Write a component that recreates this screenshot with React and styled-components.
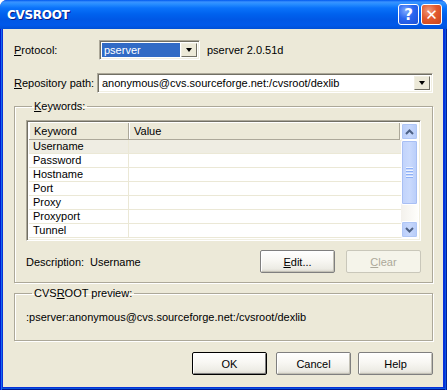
import React from 'react';
import styled, { createGlobalStyle } from 'styled-components';

const GlobalStyle = createGlobalStyle`
  html, body { margin: 0; padding: 0; background: #fff; }
  body {
    font-family: "Liberation Sans", Arial, sans-serif;
    font-size: 11px;
    color: #000;
  }
`;

const Window = styled.div`
  width: 447px;
  height: 390px;
  display: flex;
  flex-direction: column;
  border-radius: 7px 7px 0 0;
  overflow: hidden;
  background: #0831d9;
`;

const TitleBar = styled.div`
  height: 29px;
  flex: none;
  display: flex;
  align-items: center;
  padding: 0 5px 0 7px;
  box-sizing: border-box;
  background: linear-gradient(
    to bottom,
    #0058ee 0px,
    #3a93ff 2px,
    #288eff 4px,
    #0a72fa 8px,
    #0062ee 14px,
    #0057e5 20px,
    #0059ea 25px,
    #004fd6 29px
  );
`;

const Title = styled.div`
  flex: 1;
  color: #fff;
  font-family: "DejaVu Sans", "Liberation Sans", sans-serif;
  font-weight: bold;
  font-size: 12px;
  letter-spacing: -0.3px;
  text-shadow: 1px 1px 0 #0a1883;
  padding-top: 1px;
`;

const CaptionButton = styled.div`
  width: 21px;
  height: 21px;
  box-sizing: border-box;
  border: 1px solid #fff;
  border-radius: 3px;
  margin-left: 2px;
  display: flex;
  align-items: center;
  justify-content: center;
  color: #fff;
  font-family: "DejaVu Sans", sans-serif;
  font-weight: bold;
  font-size: 15px;
  background: ${p =>
    p.$close
      ? 'radial-gradient(circle at 35% 30%, #f09a7c 0%, #e2592e 45%, #c8441c 100%)'
      : 'radial-gradient(circle at 35% 30%, #7ea9ff 0%, #2a66f0 45%, #1c4fd6 100%)'};
`;

const Frame = styled.div`
  flex: 1;
  display: flex;
  padding: 0 4px 3px 3px;
  background: #0831d9;
  box-shadow: inset 1px 0 0 #0019cf, inset 2px 0 0 #166aee, inset -1px 0 0 #001ea0,
    inset -2px 0 0 #0855dd, inset 0 -1px 0 #00138c, inset 0 -2px 0 #0855dd;
`;

const Client = styled.div`
  flex: 1;
  background: #ece9d8;
  padding: 11px 10px 0 11px;
  display: flex;
  flex-direction: column;
`;

const FieldRow = styled.div`
  display: flex;
  align-items: center;
  height: 20px;
  margin-top: ${p => p.$gap || 0}px;
`;

const Label = styled.div`
  width: ${p => p.$w}px;
  flex: none;
  white-space: nowrap;
`;

const U = styled.span`
  text-decoration: underline;
  text-underline-offset: 1px;
`;

const Combo = styled.div`
  width: ${p => (p.$w ? `${p.$w}px` : 'auto')};
  flex: ${p => (p.$w ? 'none' : '1')};
  height: 20px;
  box-sizing: border-box;
  display: flex;
  background: #fff;
  border: 1px solid;
  border-color: #aca899 #fff #fff #aca899;
  box-shadow: inset 1px 1px 0 #716f64, inset -1px -1px 0 #f1efe2;
  padding: 2px;
`;

const ComboText = styled.div`
  flex: 1;
  display: flex;
  align-items: center;
  padding-left: 2px;
  white-space: nowrap;
  overflow: hidden;
  background: ${p => (p.$selected ? '#316ac5' : 'transparent')};
  color: ${p => (p.$selected ? '#fff' : '#000')};
`;

const ComboButton = styled.div`
  width: 16px;
  flex: none;
  display: flex;
  align-items: center;
  justify-content: center;
  background: #ece9d8;
  border: 1px solid;
  border-color: #f1efe2 #716f64 #716f64 #f1efe2;
  box-sizing: border-box;
  margin-left: 1px;
`;

const Caret = styled.div`
  width: 0;
  height: 0;
  border-left: 3.5px solid transparent;
  border-right: 3.5px solid transparent;
  border-top: 4px solid #000;
`;

const Info = styled.div`
  margin-left: 7px;
`;

const Group = styled.fieldset`
  margin: ${p => p.$top}px 0 0;
  padding: ${p => p.$pad};
  border: 1px solid #aca899;
  box-shadow: inset 1px 1px 0 #fff, 1px 1px 0 #fff;
  min-width: 0;
`;

const Legend = styled.legend`
  padding: 0 2px;
  margin-left: 6px;
  line-height: 13px;
`;

const ListView = styled.div`
  height: 121px;
  box-sizing: border-box;
  display: flex;
  border: 1px solid;
  border-color: #aca899 #fff #fff #aca899;
  box-shadow: inset 1px 1px 0 #716f64, inset -1px -1px 0 #f1efe2;
  padding: 2px;
  background: #fff;
`;

const Table = styled.div`
  flex: 1;
  display: flex;
  flex-direction: column;
  overflow: hidden;
`;

const HeaderRow = styled.div`
  display: flex;
  height: 17px;
  flex: none;
  box-sizing: border-box;
  background: #ece9d8;
  border-bottom: 1px solid #aca899;
  margin-right: 1px;
`;

const HeaderCell = styled.div`
  width: ${p => (p.$w ? `${p.$w}px` : 'auto')};
  flex: ${p => (p.$w ? 'none' : '1')};
  padding-left: 5px;
  display: flex;
  align-items: center;
  box-sizing: border-box;
  border-right: 1px solid #aca899;
  box-shadow: inset 1px 0 0 #fff;
`;

const Row = styled.div`
  display: flex;
  height: 14px;
  flex: none;
  box-sizing: border-box;
  border-bottom: 1px solid #ebe8d6;
  background: ${p => (p.$active ? '#efede3' : '#fff')};
`;

const Cell = styled.div`
  width: ${p => (p.$w ? `${p.$w}px` : 'auto')};
  flex: ${p => (p.$w ? 'none' : '1')};
  padding-left: 4px;
  line-height: 13px;
  box-sizing: border-box;
  border-right: ${p => (p.$w ? '1px solid #ebe8d6' : 'none')};
`;

const ScrollBar = styled.div`
  width: 17px;
  flex: none;
  display: flex;
  flex-direction: column;
  background: linear-gradient(to right, #f3f1ec, #fefefb);
`;

const ScrollButton = styled.div`
  height: 17px;
  flex: none;
  box-sizing: border-box;
  border: 1px solid #fff;
  border-radius: 2px;
  background: linear-gradient(to right, #b9cdfa, #c6d7fc 50%, #b6cbf7);
  box-shadow: inset 0 0 0 1px #afc6f6;
  display: flex;
  align-items: center;
  justify-content: center;
`;

const Thumb = styled.div`
  height: 65px;
  flex: none;
  box-sizing: border-box;
  border: 1px solid #fff;
  border-radius: 2px;
  background: linear-gradient(to right, #c1d3fb, #cadafd 50%, #b8cdf9);
  box-shadow: inset 0 0 0 1px #a8bff4;
  display: flex;
  flex-direction: column;
  align-items: center;
  justify-content: center;
  gap: 1px;
`;

const Grip = styled.div`
  width: 7px;
  height: 1px;
  background: #eef3ff;
  box-shadow: 0 1px 0 #8cb0f8;
  margin-bottom: 1px;
`;

const Track = styled.div`
  flex: 1;
`;

const DescRow = styled.div`
  display: flex;
  align-items: center;
  margin-top: 9px;
`;

const DescValue = styled.div`
  flex: 1;
`;

const Button = styled.button`
  width: 75px;
  height: 23px;
  margin: 0 0 0 ${p => p.$gap || 0}px;
  padding: 0;
  box-sizing: border-box;
  font-family: "Liberation Sans", Arial, sans-serif;
  font-size: 11px;
  color: ${p => (p.disabled ? '#aca899' : '#000')};
  border: 1px solid ${p => (p.$default ? '#000' : p.disabled ? '#c9c7ba' : '#7f7f7f')};
  border-radius: 2px;
  background: ${p =>
    p.disabled
      ? '#f5f4ea'
      : 'linear-gradient(to bottom, #ffffff 0%, #f8f7f3 45%, #ecebe4 85%, #d8d5ca 100%)'};
  box-shadow: ${p =>
    p.$default
      ? 'inset 1px 1px 0 #fff, inset -1px -1px 0 #7f7f7f'
      : p.disabled
      ? 'none'
      : 'inset 1px 1px 0 #fff, inset -1px -1px 0 #c3c1b6'};
`;

const Preview = styled.div`
  white-space: nowrap;
  line-height: 13px;
`;

const Footer = styled.div`
  display: flex;
  justify-content: flex-end;
  margin-top: 11px;
`;

const Chevron = ({ down }) => (
  <svg width="9" height="6" viewBox="0 0 9 6">
    <polyline
      points={down ? '1,1 4.5,4.5 8,1' : '1,5 4.5,1.5 8,5'}
      fill="none"
      stroke="#4d6185"
      strokeWidth="2"
    />
  </svg>
);

const keywords = ['Username', 'Password', 'Hostname', 'Port', 'Proxy', 'Proxyport', 'Tunnel'];

export default function App() {
  return (
    <>
      <GlobalStyle />
      <Window>
        <TitleBar>
          <Title>CVSROOT</Title>
          <CaptionButton>?</CaptionButton>
          <CaptionButton $close>✕</CaptionButton>
        </TitleBar>
        <Frame>
          <Client>
            <FieldRow>
              <Label $w={85}>
                <U>P</U>rotocol:
              </Label>
              <Combo $w={101}>
                <ComboText $selected>pserver</ComboText>
                <ComboButton>
                  <Caret />
                </ComboButton>
              </Combo>
              <Info>pserver 2.0.51d</Info>
            </FieldRow>
            <FieldRow $gap={13}>
              <Label $w={83}>
                <U>R</U>epository path:
              </Label>
              <Combo>
                <ComboText>anonymous@cvs.sourceforge.net:/cvsroot/dexlib</ComboText>
                <ComboButton>
                  <Caret />
                </ComboButton>
              </Combo>
            </FieldRow>

            <Group $top={7} $pad="7px 11px 9px 11px">
              <Legend>
                <U>K</U>eywords:
              </Legend>
              <ListView>
                <Table>
                  <HeaderRow>
                    <HeaderCell $w={100}>Keyword</HeaderCell>
                    <HeaderCell>Value</HeaderCell>
                  </HeaderRow>
                  {keywords.map((k, i) => (
                    <Row key={k} $active={i === 0}>
                      <Cell $w={100}>{k}</Cell>
                      <Cell />
                    </Row>
                  ))}
                </Table>
                <ScrollBar>
                  <ScrollButton>
                    <Chevron />
                  </ScrollButton>
                  <Thumb>
                    <Grip />
                    <Grip />
                    <Grip />
                    <Grip />
                  </Thumb>
                  <Track />
                  <ScrollButton>
                    <Chevron down />
                  </ScrollButton>
                </ScrollBar>
              </ListView>
              <DescRow>
                <Label $w={64}>Description:</Label>
                <DescValue>Username</DescValue>
                <Button>
                  <U>E</U>dit...
                </Button>
                <Button $gap={11} disabled>
                  <U>C</U>lear
                </Button>
              </DescRow>
            </Group>

            <Group $top={4} $pad="11px 11px 16px 11px">
              <Legend>
                CVS<U>R</U>OOT preview:
              </Legend>
              <Preview>:pserver:anonymous@cvs.sourceforge.net:/cvsroot/dexlib</Preview>
            </Group>

            <Footer>
              <Button $default>OK</Button>
              <Button $gap={9}>Cancel</Button>
              <Button $gap={7}>Help</Button>
            </Footer>
          </Client>
        </Frame>
      </Window>
    </>
  );
}
